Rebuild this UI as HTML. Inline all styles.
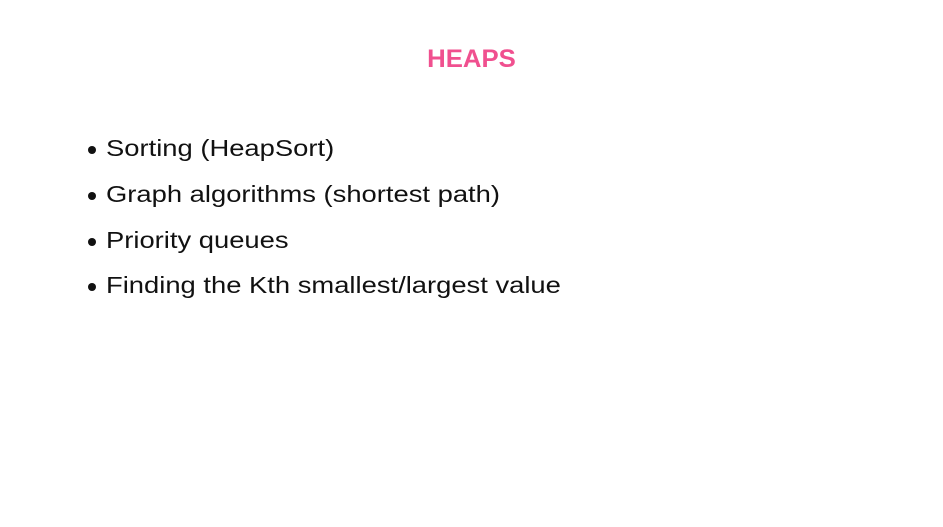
<!DOCTYPE html>
<html><head><style>
body{margin:0;width:943px;height:527px;background:#fff;font-family:"Liberation Sans",sans-serif;position:relative;overflow:hidden}
h1{position:absolute;top:45px;left:0;width:943px;text-align:center;margin:0;font-size:25px;font-weight:bold;color:#f0508f;transform:scaleX(1.03)}
.i{position:absolute;left:88px;font-size:23px;color:#111;white-space:nowrap}
.i span{display:inline-block;transform:scaleX(1.19);transform-origin:left;margin-left:18px}
.i:before{content:"";position:absolute;left:0;top:11px;width:8px;height:8px;border-radius:50%;background:#111}
</style></head><body>
<h1>HEAPS</h1>
<div class="i" style="top:135px"><span>Sorting (HeapSort)</span></div>
<div class="i" style="top:181px"><span>Graph algorithms (shortest path)</span></div>
<div class="i" style="top:227px"><span>Priority queues</span></div>
<div class="i" style="top:272px"><span>Finding the Kth smallest/largest value</span></div>
</body></html>
